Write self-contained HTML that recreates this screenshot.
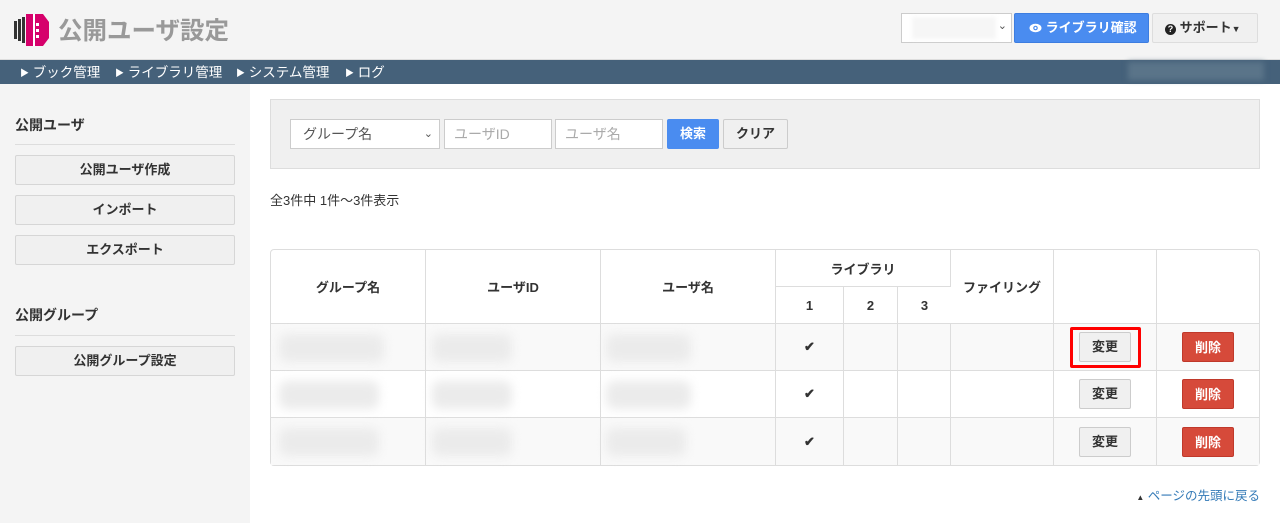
<!DOCTYPE html>
<html><head><meta charset="utf-8"><style>
*{box-sizing:border-box;margin:0;padding:0}
body{width:1280px;height:523px;overflow:hidden;background:#fff;font-family:"Liberation Sans","Noto Sans CJK JP",sans-serif;font-size:13px;color:#333;position:relative}
.abs{position:absolute}
#hdr{left:0;top:0;width:1280px;height:60px;background:#f4f4f4;border-bottom:1px solid #ddd}
#nav{left:0;top:60px;width:1280px;height:24px;background:#45617a;color:#fff;font-size:13.5px}
#nav span{position:absolute;top:1px}
#nav i{font-style:normal;font-size:9px;vertical-align:1px}
#side{left:0;top:84px;width:250px;height:439px;background:#f4f4f4}
.sbtn{position:absolute;left:15px;width:220px;height:30px;border:1px solid #d6d6d6;background:#f0f0f0;text-align:center;line-height:28px;font-weight:bold;font-size:13px;border-radius:2px}
.sh{position:absolute;left:15px;font-weight:bold;font-size:14px}
.sl{position:absolute;left:15px;width:220px;border-top:1px solid #ddd}
.blur{position:absolute;background:#ebebeb;filter:blur(5px);border-radius:8px}
table{position:absolute;left:270px;top:249px;width:990px;border-collapse:separate;border-spacing:0;border:1px solid #ddd;border-radius:4px;font-size:13px}
td,th{border-right:1px solid #ddd;border-bottom:1px solid #ddd;text-align:center;font-weight:bold;padding:0}
tr>*:last-child{border-right:none}
tbody tr:last-child td{border-bottom:none}
tbody tr{height:47px}
tbody tr:nth-child(odd){background:#f9f9f9}
.chg{display:inline-block;width:52px;height:30px;border:1px solid #ccc;background:#f0f0f0;line-height:28px;border-radius:2px}
.del{display:inline-block;width:52px;height:30px;background:#d64a3a;color:#fff;line-height:30px;border-radius:2px;border:1px solid #c0392b}
</style></head><body>
<div id="hdr" class="abs">
 <svg class="abs" style="left:14px;top:12px" width="36" height="36" viewBox="0 0 36 36">
  <rect x="0" y="9" width="3" height="18" fill="#333"/><rect x="4" y="7" width="3" height="22" fill="#333"/><rect x="8" y="5" width="3" height="26" fill="#333"/>
  <polygon points="12,2 29,2 35,10 35,26 29,34 12,34" fill="#d6006b"/>
  <rect x="19" y="2" width="2" height="32" fill="#fff"/><rect x="22" y="11" width="3" height="3" fill="#fff"/><rect x="22" y="17" width="3" height="3" fill="#fff"/><rect x="22" y="23" width="3" height="3" fill="#fff"/>
 </svg>
 <div class="abs" style="left:58px;top:12px;font-size:24.5px;font-weight:bold;color:#999">公開ユーザ設定</div>
 <div class="abs" style="left:901px;top:13px;width:111px;height:30px;background:#fff;border:1px solid #ccc"><div class="abs" style="left:10px;top:3px;width:84px;height:22px;background:#f6f6f6;filter:blur(2px)"></div><span class="abs" style="right:4px;top:5px;font-size:11px;color:#555">⌄</span></div>
 <div class="abs" style="left:1014px;top:13px;width:135px;height:30px;background:#4a8cf0;border:1px solid #3d7de0;border-radius:2px;color:#fff;font-weight:bold;line-height:28px;font-size:13px;padding-left:14px">
  <svg width="13" height="10" viewBox="0 0 13 10" style="vertical-align:-1px"><ellipse cx="6.5" cy="5" rx="6" ry="4.2" fill="#fff"/><circle cx="6.5" cy="5" r="2.3" fill="#4a8cf0"/><circle cx="6.5" cy="5" r="1.1" fill="#fff"/></svg> ライブラリ確認</div>
 <div class="abs" style="left:1152px;top:13px;width:106px;height:30px;background:#f0f0f0;border:1px solid #ddd;border-radius:2px;font-weight:bold;line-height:28px;font-size:13px;padding-left:12px">
  <span style="display:inline-block;width:11px;height:11px;border-radius:50%;background:#222;color:#fff;font-size:9px;line-height:11px;text-align:center;vertical-align:0">?</span> サポート<span style="font-size:9px">▼</span></div>
</div>
<div id="nav" class="abs">
 <span style="left:20px"><i>▶</i> ブック管理</span><span style="left:115px"><i>▶</i> ライブラリ管理</span><span style="left:236px"><i>▶</i> システム管理</span><span style="left:345px"><i>▶</i> ログ</span>
 <div class="abs" style="left:1128px;top:2px;width:136px;height:18px;background:#5a7489;filter:blur(3px)"></div>
</div>
<div id="side" class="abs">
 <div class="sh" style="top:31px">公開ユーザ</div><div class="sl" style="top:60px"></div>
 <div class="sbtn" style="top:71px">公開ユーザ作成</div>
 <div class="sbtn" style="top:111px">インポート</div>
 <div class="sbtn" style="top:151px">エクスポート</div>
 <div class="sh" style="top:221px">公開グループ</div><div class="sl" style="top:251px"></div>
 <div class="sbtn" style="top:262px">公開グループ設定</div>
</div>
<div class="abs" style="left:270px;top:99px;width:990px;height:70px;background:#f0f0f0;border:1px solid #ddd"></div>
<div class="abs" style="left:290px;top:119px;width:150px;height:30px;background:#fff;border:1px solid #ccc;font-size:14px;color:#555;line-height:28px;padding-left:12px">グループ名<span class="abs" style="right:6px;top:0;font-size:11px">⌄</span></div>
<div class="abs" style="left:444px;top:119px;width:108px;height:30px;background:#fff;border:1px solid #ccc;font-size:14px;color:#aaa;line-height:28px;padding-left:9px">ユーザID</div>
<div class="abs" style="left:555px;top:119px;width:108px;height:30px;background:#fff;border:1px solid #ccc;font-size:14px;color:#aaa;line-height:28px;padding-left:9px">ユーザ名</div>
<div class="abs" style="left:667px;top:119px;width:52px;height:30px;background:#4a8cf0;border-radius:2px;color:#fff;font-weight:bold;text-align:center;line-height:30px">検索</div>
<div class="abs" style="left:723px;top:119px;width:65px;height:30px;background:#f0f0f0;border:1px solid #ccc;border-radius:2px;font-weight:bold;text-align:center;line-height:28px">クリア</div>
<div class="abs" style="left:270px;top:190px;font-size:13px">全3件中 1件～3件表示</div>
<table>
<thead>
<tr style="height:37px"><th rowspan="2" style="width:155px">グループ名</th><th rowspan="2" style="width:175px">ユーザID</th><th rowspan="2" style="width:175px">ユーザ名</th><th colspan="3">ライブラリ</th><th rowspan="2" style="width:103px">ファイリング</th><th rowspan="2" style="width:103px"></th><th rowspan="2"></th></tr>
<tr style="height:37px"><th style="width:68px">1</th><th style="width:54px">2</th><th style="width:53px">3</th></tr>
</thead>
<tbody>
<tr><td style="position:relative"><div class="blur" style="left:8px;top:10px;width:105px;height:28px"></div></td><td style="position:relative"><div class="blur" style="left:6px;top:10px;width:80px;height:28px"></div></td><td style="position:relative"><div class="blur" style="left:5px;top:10px;width:85px;height:28px"></div></td><td>✔</td><td></td><td></td><td></td><td style="position:relative"><div class="abs" style="left:16px;top:3px;width:71px;height:41px;border:3px solid #f00;border-radius:2px"></div><span class="chg">変更</span></td><td><span class="del">削除</span></td></tr>
<tr><td style="position:relative"><div class="blur" style="left:8px;top:10px;width:100px;height:28px"></div></td><td style="position:relative"><div class="blur" style="left:6px;top:10px;width:80px;height:28px"></div></td><td style="position:relative"><div class="blur" style="left:5px;top:10px;width:85px;height:28px"></div></td><td>✔</td><td></td><td></td><td></td><td><span class="chg">変更</span></td><td><span class="del">削除</span></td></tr>
<tr><td style="position:relative"><div class="blur" style="left:8px;top:10px;width:100px;height:28px"></div></td><td style="position:relative"><div class="blur" style="left:6px;top:10px;width:80px;height:28px"></div></td><td style="position:relative"><div class="blur" style="left:5px;top:10px;width:80px;height:28px"></div></td><td>✔</td><td></td><td></td><td></td><td><span class="chg">変更</span></td><td><span class="del">削除</span></td></tr>
</tbody>
</table>
<div class="abs" style="right:20px;top:485px;color:#337ab7;font-size:12.5px"><span style="font-size:8px;color:#333">▲</span> ページの先頭に戻る</div>
</body></html>
